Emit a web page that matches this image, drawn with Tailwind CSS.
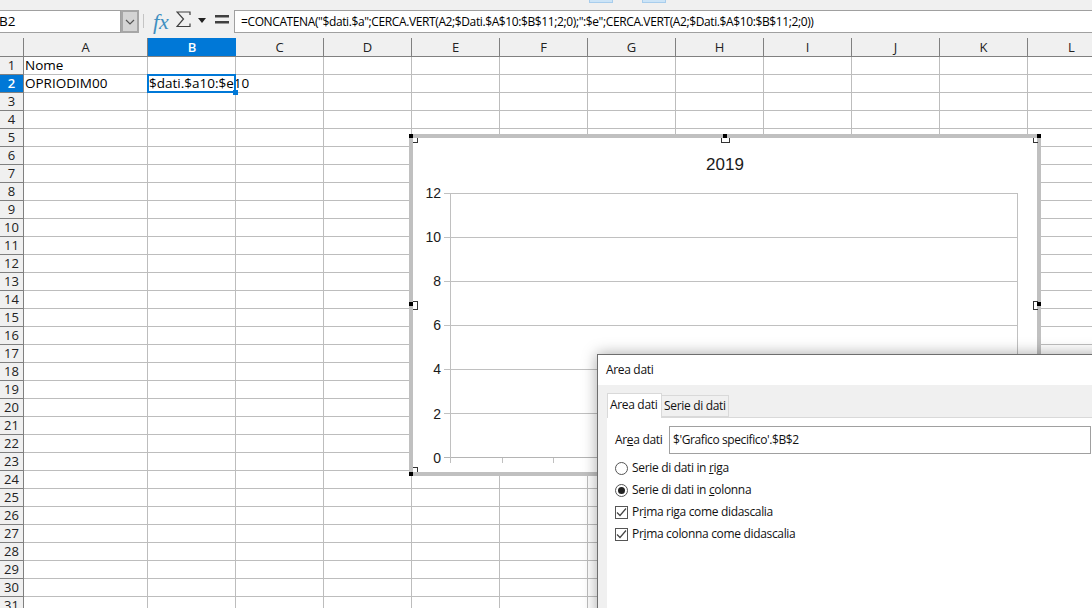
<!DOCTYPE html>
<html lang="it">
<head>
  <meta charset="UTF-8">
  <title>Area dati</title>
  <script src="https://cdn.jsdelivr.net/npm/@tailwindcss/browser@4"></script>
</head>
<body class="relative w-[1092px] h-[608px] overflow-hidden bg-white text-black font-['Open_Sans',sans-serif]">

  <!-- Barra della formula -->
  <div class="relative h-[38px] bg-[#f0f0f0]">
    <div class="absolute left-[589px] top-0 w-[24px] h-[3px] bg-[#cce4f7] border-x border-b border-[#a8cdec]"></div>
    <div class="absolute left-[642px] top-0 w-[24px] h-[3px] bg-[#cce4f7] border-x border-b border-[#a8cdec]"></div>
    <div class="flex items-start pt-[10px]">
      <div class="w-[121px] h-[23px] bg-white border border-[#a0a0a0] border-l-0 text-[13.5px] leading-[21px] -indent-[1px]">B2</div>
      <div class="w-[18px] h-[23px] bg-[#d4d4d4] border-2 border-[#a6a6a6] flex items-center justify-center">
        <svg width="10" height="6" viewBox="0 0 10 6" fill="none" stroke="#555" stroke-width="1.2"><path d="M1 1l4 4 4-4"/></svg>
      </div>
      <div class="w-px h-[14px] mt-[4px] ml-[4px] bg-[#c4c4c4]"></div>
      <span class="ml-[9px] w-[17px] font-['Liberation_Serif',serif] italic text-[22px] leading-[24px] text-[#3f8fc0]">fx</span>
      <svg class="ml-[6px] mt-[1px]" width="15" height="17" viewBox="0 0 15 17" fill="none" stroke="#404040" stroke-width="1.2"><path d="M14 4V1H1l6.500 7L1 15.500h13v-3"/></svg>
      <svg class="ml-[7px] mt-[8px]" width="8" height="5" viewBox="0 0 8 5" fill="#222"><path d="M0 0h8L4 5z"/></svg>
      <svg class="ml-[9px] mt-[5px]" width="14" height="9" viewBox="0 0 14 9" fill="#404040"><path d="M0 0h14v2.500H0zM0 6h14v2.500H0z"/></svg>
      <div class="ml-[5px] flex-1 h-[23px] bg-white border border-r-0 border-[#a0a0a0] pl-[6px] text-[12px] leading-[21px] tracking-[-0.39px] whitespace-nowrap overflow-hidden">=CONCATENA("$dati.$a";CERCA.VERT(A2;$Dati.$A$10:$B$11;2;0);":$e";CERCA.VERT(A2;$Dati.$A$10:$B$11;2;0))</div>
    </div>
  </div>

  <!-- Foglio -->
  <div id="foglio">
    <div class="flex h-[19px] bg-[#f0f0f0] border-b border-[#808080] text-center text-[#222] leading-[18px] text-[13px]">
      <div class="w-[24px] shrink-0 border-r border-[#808080]"></div>
      <div class="w-[124px] shrink-0 border-r border-[#808080]">A</div>
      <div class="w-[88px] shrink-0 bg-[#0078d7] text-white font-semibold">B</div>
      <div class="w-[88px] shrink-0 border-r border-[#808080]">C</div>
      <div class="w-[88px] shrink-0 border-r border-[#808080]">D</div>
      <div class="w-[88px] shrink-0 border-r border-[#808080]">E</div>
      <div class="w-[88px] shrink-0 border-r border-[#808080]">F</div>
      <div class="w-[88px] shrink-0 border-r border-[#808080]">G</div>
      <div class="w-[88px] shrink-0 border-r border-[#808080]">H</div>
      <div class="w-[88px] shrink-0 border-r border-[#808080]">I</div>
      <div class="w-[88px] shrink-0 border-r border-[#808080]">J</div>
      <div class="w-[88px] shrink-0 border-r border-[#808080]">K</div>
      <div class="w-[88px] shrink-0 border-r border-[#808080]">L</div>
    </div>
    <div id="righe"></div>
  </div>

  <!-- Cursore di cella -->
  <div class="absolute left-[147px] top-[74px] w-[89px] h-[19px] border-2 border-[#0078d7]"></div>
  <div class="absolute left-[233px] top-[90px] w-[5px] h-[5px] bg-[#0078d7]"></div>

  <!-- Grafico -->
  <div class="absolute left-[409px] top-[134px] w-[632px] h-[342px] bg-white border-4 border-[#c0c0c0]">
    <div class="absolute left-0 right-0 top-[17px] text-center font-['Liberation_Sans',sans-serif] text-[17px] leading-5 text-[#1a1a1a]">2019</div>

    <div class="absolute left-[0px] top-[51px] w-[32px] h-[272px] font-['Liberation_Sans',sans-serif] text-[14px] leading-4 text-[#1a1a1a] text-right">
      <div class="absolute right-[4px] top-[-4px]">12</div>
      <div class="absolute right-[4px] top-[40px]">10</div>
      <div class="absolute right-[4px] top-[84px]">8</div>
      <div class="absolute right-[4px] top-[128px]">6</div>
      <div class="absolute right-[4px] top-[172px]">4</div>
      <div class="absolute right-[4px] top-[217px]">2</div>
      <div class="absolute right-[4px] top-[261px]">0</div>
    </div>

    <!-- Griglia del grafico -->
    <div class="absolute left-[31px] top-[55px] w-[574px] h-[265px] flex flex-col justify-between">
      <div class="h-px bg-[#c0c0c0]"></div>
      <div class="h-px bg-[#c0c0c0]"></div>
      <div class="h-px bg-[#c0c0c0]"></div>
      <div class="h-px bg-[#c0c0c0]"></div>
      <div class="h-px bg-[#c0c0c0]"></div>
      <div class="h-px bg-[#c0c0c0]"></div>
      <div class="h-px bg-[#b4b4b4]"></div>
    </div>
    <div class="absolute left-[37px] top-[55px] w-px h-[270px] bg-[#c0c0c0]"></div>
    <div class="absolute left-[604px] top-[55px] w-px h-[265px] bg-[#c0c0c0]"></div>
    <div class="absolute left-[89px] top-[320px] w-px h-[5px] bg-[#c0c0c0]"></div>
    <div class="absolute left-[140px] top-[320px] w-px h-[5px] bg-[#c0c0c0]"></div>
  </div>

  <!-- Maniglie -->
  <div class="absolute left-[409px] top-[134px] w-[4px] h-[4px] bg-black"></div>
  <div class="absolute left-[413px] top-[138px] w-[5px] h-[5px] border-r border-b border-[#333]"></div>
  <div class="absolute left-[723px] top-[134px] w-[4px] h-[4px] bg-black"></div>
  <div class="absolute left-[721px] top-[138px] w-[9px] h-[5px] border border-t-0 border-[#333]"></div>
  <div class="absolute left-[1037px] top-[134px] w-[4px] h-[4px] bg-black"></div>
  <div class="absolute left-[1033px] top-[138px] w-[5px] h-[5px] border-l border-b border-[#333]"></div>
  <div class="absolute left-[409px] top-[302px] w-[4px] h-[4px] bg-black"></div>
  <div class="absolute left-[413px] top-[301px] w-[5px] h-[9px] border border-l-0 border-[#333]"></div>
  <div class="absolute left-[1037px] top-[302px] w-[4px] h-[4px] bg-black"></div>
  <div class="absolute left-[1033px] top-[301px] w-[5px] h-[9px] border border-r-0 border-[#333]"></div>
  <div class="absolute left-[409px] top-[472px] w-[4px] h-[4px] bg-black"></div>
  <div class="absolute left-[413px] top-[467px] w-[5px] h-[5px] border-r border-t border-[#333]"></div>

  <!-- Finestra di dialogo -->
  <div class="absolute left-[597px] top-[354px] w-[520px] h-[270px] bg-[#f0f0f0] border border-[#6e6e6e] shadow-[0_0_14px_rgba(0,0,0,0.35)] text-[12px] tracking-[-0.33px] text-[#111]">
    <div class="h-[30px] bg-white pl-[8px] leading-[29px]">Area dati</div>
    <div class="flex items-end h-[32px] pl-[9px]">
      <div class="relative z-10 w-[55px] h-[25px] -mb-px bg-white border border-b-0 border-[#d9d9d9] pl-[2px] leading-[22px]">Area dati</div>
      <div class="w-[67px] h-[22px] border border-l-0 border-[#d9d9d9] pl-[2px] leading-[20px]">Serie di dati</div>
    </div>
    <div class="ml-[9px] h-[220px] bg-white border-t border-[#d9d9d9] pt-[8px] pl-[8px]">
      <div class="flex items-center h-[28px]">
        <span class="w-[54px]">Ar<u>e</u>a dati</span>
        <div class="w-[422px] h-[28px] border border-[#a0a0a0] pl-[3px] leading-[26px] tracking-[-0.4px]">$'Grafico specifico'.$B$2</div>
      </div>
      <div class="mt-[3px] flex flex-col">
        <label class="flex items-center gap-[4px] h-[22px]">
          <span class="w-[13px] h-[13px] rounded-full border border-[#555] bg-white"></span>
          <span>Serie di dati in <u>r</u>iga</span>
        </label>
        <label class="flex items-center gap-[4px] h-[22px]">
          <span class="w-[13px] h-[13px] rounded-full border border-[#555] bg-white flex items-center justify-center"><span class="w-[7px] h-[7px] rounded-full bg-[#222]"></span></span>
          <span>Serie di dati in <u>c</u>olonna</span>
        </label>
        <label class="flex items-center gap-[4px] h-[22px]">
          <span class="w-[13px] h-[13px] border border-[#555] bg-white flex items-center justify-center"><svg width="11" height="11" viewBox="0 0 11 11" fill="none" stroke="#444" stroke-width="1.2"><path d="M1 5.500l3 3 6-7"/></svg></span>
          <span>Pr<u>i</u>ma riga come didascalia</span>
        </label>
        <label class="flex items-center gap-[4px] h-[22px]">
          <span class="w-[13px] h-[13px] border border-[#555] bg-white flex items-center justify-center"><svg width="11" height="11" viewBox="0 0 11 11" fill="none" stroke="#444" stroke-width="1.2"><path d="M1 5.500l3 3 6-7"/></svg></span>
          <span>Pr<u>i</u>ma colonna come didascalia</span>
        </label>
      </div>
    </div>
  </div>

  <script>
    // righe del foglio: 31 righe, testo solo nelle prime due
    const testi = { 1: ['Nome', ''], 2: ['OPRIODIM00', '$dati.$a10:$e10'] };
    const righe = document.getElementById('righe');
    for (let r = 1; r <= 31; r++) {
      const riga = document.createElement('div');
      riga.className = 'flex h-[18px]';
      const num = document.createElement('div');
      num.className = r === 2
        ? 'w-[24px] h-[18px] shrink-0 bg-[#0078d7] text-white font-semibold text-center text-[13px] leading-[17px] border-b border-r border-[#808080]'
        : 'w-[24px] h-[18px] shrink-0 bg-[#f0f0f0] text-[#222] text-center text-[13px] leading-[17px] border-b border-r border-[#808080]';
      num.textContent = r;
      riga.appendChild(num);
      for (let c = 0; c < 12; c++) {
        const cella = document.createElement('div');
        cella.className = c === 0
          ? 'w-[124px] h-[18px] shrink-0 border-b border-r border-[#bdbdbd] pl-[1px] leading-[17px] whitespace-nowrap text-[13.5px]'
          : 'w-[88px] h-[18px] shrink-0 border-b border-r border-[#bdbdbd] pl-[1px] leading-[17px] whitespace-nowrap text-[13.5px]';
        if (testi[r] && testi[r][c]) cella.textContent = testi[r][c];
        riga.appendChild(cella);
      }
      righe.appendChild(riga);
    }
  </script>
</body>
</html>
